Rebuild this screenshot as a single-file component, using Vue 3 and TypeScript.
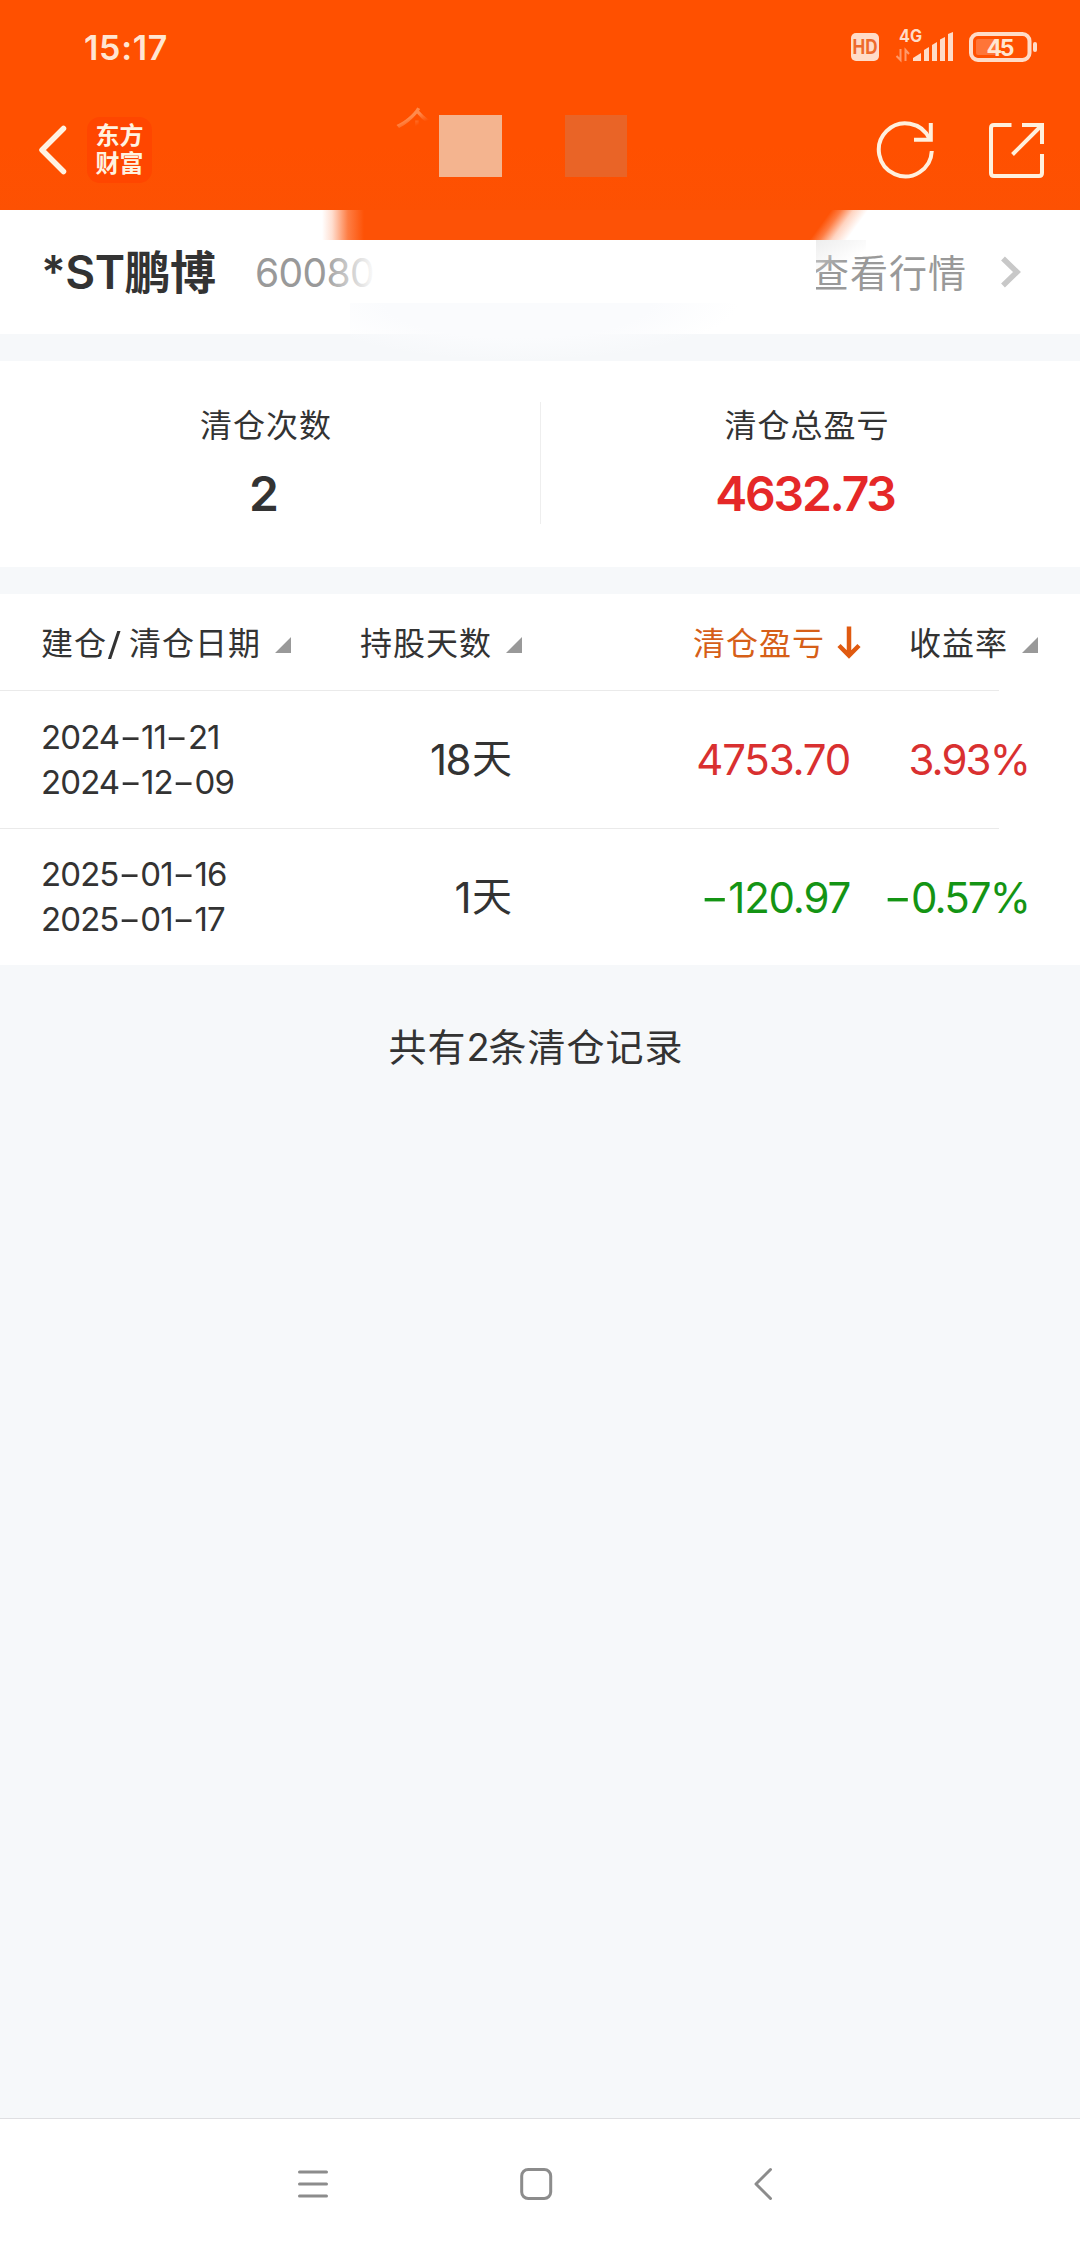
<script setup lang="ts">
interface ClearedRecord {
  opened: string
  closed: string
  days: number
  profit: string
  rate: string
  trend: 'up' | 'down'
}

const records: ClearedRecord[] = [
  { opened: '2024-11-21', closed: '2024-12-09', days: 18, profit: '4753.70', rate: '3.93%', trend: 'up' },
  { opened: '2025-01-16', closed: '2025-01-17', days: 1, profit: '-120.97', rate: '-0.57%', trend: 'down' },
]

// Splits a value so that its dashes can be styled apart from the digits.
const pieces = (value: string): string[] => value.split(/(-)/).filter(Boolean)
</script>

<template>
  <div class="screen">
    <header class="top">
      <div class="status">
        <span class="clock">15:17</span>
        <svg class="status-icons" width="190" height="56" viewBox="850 18 190 56">
          <rect x="852" y="33" width="28" height="28" rx="5" fill="#ffdcc8" />
          <text x="866" y="54" class="hd" text-anchor="middle" textLength="25" lengthAdjust="spacingAndGlyphs">HD</text>
          <text x="900" y="42" class="net" textLength="23" lengthAdjust="spacingAndGlyphs">4G</text>
          <g fill="none" stroke="#ff9a6a" stroke-width="2">
            <path d="M901.500 49V60L897.500 56" />
            <path d="M906.500 61V50L910 54" />
          </g>
          <g fill="#ffdcc8">
            <path d="M914 61V58L922 53V61Z" />
            <path d="M925 61V50L930 47V61Z" />
            <path d="M933 61V45L938 42V61Z" />
            <path d="M941 61V39.500L946 37V61Z" />
            <path d="M949 61V34L954 32V61Z" />
          </g>
          <rect x="972" y="34" width="58.500" height="26" rx="7" fill="none" stroke="#ffdcc8" stroke-width="4" />
          <rect x="977" y="39" width="20" height="16" rx="2" fill="#ff7538" />
          <rect x="1034" y="42" width="4" height="10" rx="2" fill="#ffdcc8" />
          <text x="987.500" y="56" class="battery" textLength="28" lengthAdjust="spacing">45</text>
        </svg>
      </div>
      <div class="bar">
        <svg width="30" height="52" viewBox="38 124 30 52" class="back">
          <path d="M63.500 128.500L42 150L63.500 171.500" fill="none" stroke="#fff3e2" stroke-width="5.500" stroke-linecap="round" stroke-linejoin="round" />
        </svg>
        <div class="badge"><span>东方</span><span>财富</span></div>
        <div class="actions">
          <svg width="60" height="60" viewBox="876 119 60 60" fill="none" stroke="#fff0dd" stroke-width="4">
            <path d="M932.800 150A26.500 26.500 0 1 1 930.500 138" />
            <path d="M915 138.700H931.800V122" />
          </svg>
          <svg width="60" height="60" viewBox="988 119 60 60" fill="none" stroke="#fff0dd" stroke-width="4">
            <path d="M1012.500 124H995q-3 0-3 3V172q0 3 3 3H1040q3 0 3-3V153" />
            <path d="M1023 124H1043V143M1013.500 153.500L1043 124" />
          </svg>
        </div>
      </div>
      <span class="ghost">个</span>
      <i class="block light"></i>
      <i class="block dark"></i>
    </header>

    <section class="stock">
      <h1>*ST鹏博</h1>
      <span class="code">60080</span>
      <span class="quote">查看行情</span>
      <svg width="22" height="34" viewBox="1001 255 22 34" class="chevron">
        <path d="M1004 258.500L1018 272L1004 285.500" fill="none" stroke="#c8c8c8" stroke-width="5.500" />
      </svg>
      <i class="smear"></i>
      <i class="smear-end"></i>
      <i class="fade"></i>
      <i class="shade"></i>
      <i class="tint"></i>
    </section>

    <section class="summary">
      <div class="cell first">
        <span class="label">清仓次数</span>
        <strong>2</strong>
      </div>
      <div class="cell">
        <span class="label">清仓总盈亏</span>
        <strong class="total">4632.73</strong>
      </div>
    </section>

    <section class="table">
      <div class="row head">
        <span class="c1">建仓<b class="slash">/</b>清仓日期<i class="tri"></i></span>
        <span class="c2">持股天数<i class="tri"></i></span>
        <span class="c3 active">清仓盈亏
          <svg width="24" height="33" viewBox="838 625 24 33"><path d="M850 625.500V654M840 644.500L850 654.500L860 644.500" fill="none" stroke="#e05a10" stroke-width="4.500" /></svg>
        </span>
        <span class="c4">收益率<i class="tri"></i></span>
      </div>
      <div v-for="r in records" :key="r.opened" class="row">
        <div class="dates">
          <div v-for="d in [r.opened, r.closed]" :key="d"><span v-for="(p, i) in pieces(d)" :key="i" :class="{ dash: p === '-' }">{{ p }}</span></div>
        </div>
        <div class="days"><span>{{ r.days }}</span><em>天</em></div>
        <div class="profit" :class="r.trend"><span v-for="(p, i) in pieces(r.profit)" :key="i" :class="{ dash: p === '-' }">{{ p }}</span></div>
        <div class="rate" :class="r.trend"><span v-for="(p, i) in pieces(r.rate)" :key="i" :class="{ dash: p === '-' }">{{ p }}</span></div>
      </div>
    </section>

    <p class="count">共有<span>2</span>条清仓记录</p>

    <footer class="nav">
      <svg width="34" height="36" viewBox="297 2165 34 36"><path d="M300.500 2171H327.500M300.500 2183H327.500M300.500 2195H327.500" /></svg>
      <svg width="36" height="36" viewBox="519 2165 36 36"><rect x="522.700" y="2168.500" width="29" height="29" rx="6.500" /></svg>
      <svg width="24" height="36" viewBox="752 2165 24 36"><path d="M771.500 2168.500L757 2183L771.500 2197.500" /></svg>
    </footer>
  </div>
</template>

<style>
body {
  background: #f6f7fa;
}
</style>

<style scoped>
.screen {
  width: 1080px;
  height: 2248px;
  display: flex;
  flex-direction: column;
  background: #f6f8fa;
  color: #333;
  font-family: Inter, "Noto Sans CJK SC", sans-serif;
  overflow: hidden;
}
.top {
  position: relative;
  height: 210px;
  flex: none;
  background: linear-gradient(#ff5000 70%, #fd5103);
}
.status {
  height: 96px;
  display: flex;
  justify-content: space-between;
  padding: 0 41px 0 84px;
}
.clock {
  line-height: 96px;
  font-size: 34px;
  font-weight: 600;
  letter-spacing: 0.7px;
  color: #ffe6d2;
}
.status-icons {
  margin-top: 18px;
}
.hd {
  font-size: 20px;
  font-weight: 700;
  fill: #ee6a2c;
}
.net {
  font-size: 17px;
  font-weight: 700;
  fill: #ffdcc8;
}
.battery {
  font-size: 23px;
  font-weight: 700;
  fill: #ffe6d2;
}
.bar {
  height: 106px;
  display: flex;
  align-items: center;
  padding: 1px 33px 0 38px;
  box-sizing: border-box;
}
.badge {
  width: 65px;
  height: 66px;
  margin-left: 19px;
  border-radius: 13px;
  background: #ff4600;
  display: flex;
  flex-direction: column;
  align-items: center;
  justify-content: center;
  color: #fff3e0;
  font-size: 24px;
  font-weight: 700;
  line-height: 28px;
}
.actions {
  margin-left: auto;
  display: flex;
  gap: 52px;
}
.ghost {
  position: absolute;
  left: 395px;
  top: 106px;
  font-size: 44px;
  line-height: 46px;
  color: #ff8a4c;
  -webkit-mask-image: linear-gradient(155deg, #000 28%, transparent 45%);
  mask-image: linear-gradient(155deg, #000 28%, transparent 45%);
}
.block {
  position: absolute;
  top: 115px;
  width: 63px;
  height: 62px;
}
.light {
  left: 439px;
  background: #f4b48f;
}
.dark {
  left: 565px;
  width: 62px;
  background: #e96427;
}
.stock {
  position: relative;
  flex: none;
  height: 124px;
  display: flex;
  align-items: center;
  background: #fff;
  padding: 0 58px 0 41px;
}
h1 {
  margin: 0;
  width: 214px;
  white-space: nowrap;
  font-size: 46px;
  line-height: 126px;
  font-weight: 600;
  letter-spacing: -0.5px;
}
.code {
  font-size: 39px;
  color: #999;
  letter-spacing: -0.6px;
}
.quote {
  margin-left: auto;
  margin-right: 33px;
  margin-top: -4px;
  font-size: 38px;
  letter-spacing: 1px;
  color: #999;
}
.smear {
  position: absolute;
  left: 322px;
  top: 0;
  width: 456px;
  height: 30px;
  background: linear-gradient(90deg, transparent, #fd520630 10px, #fd5206c0 26px, #fd5206 42px);
}
.smear-end {
  position: absolute;
  left: 777px;
  top: 0;
  width: 100px;
  height: 30px;
  background: linear-gradient(126deg, #fd5206 44px, #fd5206c0 52px, #fd520640 62px, #fd520600 74px);
}
.fade {
  position: absolute;
  left: 322px;
  top: 30px;
  width: 494px;
  height: 94px;
  background: linear-gradient(90deg, #fff0, #fff 54px);
}
.shade {
  position: absolute;
  left: 816px;
  top: 30px;
  width: 50px;
  height: 34px;
  background: linear-gradient(150deg, #e9e9e9cc, #fff0 65%);
}
.tint {
  position: absolute;
  left: 350px;
  top: 93px;
  width: 400px;
  height: 58px;
  background: radial-gradient(ellipse 220px 58px at 42% 0, #fafbfd 60%, #fafbfd00);
}
.summary {
  flex: none;
  height: 206px;
  margin-top: 27px;
  display: flex;
  background: #fff;
}
.cell {
  flex: 1;
  display: flex;
  flex-direction: column;
  align-items: center;
  padding-top: 41px;
  padding-right: 7px;
}
.first {
  padding-right: 9px;
  background: linear-gradient(#eee, #eee) 100% 41px / 1px 122px no-repeat;
}
.label {
  font-size: 32px;
  line-height: 48px;
  letter-spacing: 1px;
}
strong {
  margin-top: 19px;
  margin-right: 4px;
  font-size: 48px;
  line-height: 50px;
  font-weight: 600;
}
.total {
  color: #e52828;
  letter-spacing: -2.2px;
}
.table {
  flex: none;
  margin-top: 27px;
  background: #fff;
}
.row {
  height: 137px;
  display: flex;
  align-items: center;
  padding: 0 41px 0 41px;
  border-bottom: 1px solid;
  border-image: linear-gradient(90deg, #eaeaea 998px, transparent 998px) 1;
}
.row:last-child {
  height: 136px;
  border: 0;
}
.head {
  box-sizing: border-box;
  height: 97px;
  padding-top: 4px;
  font-size: 32px;
  letter-spacing: 1px;
  line-height: 48px;
}
.head > span {
  display: flex;
  flex: none;
  align-items: center;
  white-space: nowrap;
}
.slash {
  width: 22px;
  box-sizing: border-box;
  padding-right: 5px;
  font-weight: 400;
  text-align: center;
  transform: scaleX(1.25);
}
.tri {
  flex: none;
  width: 16px;
  height: 16px;
  margin: 2px 0 0 14px;
  background: #999;
  clip-path: polygon(100% 0, 100% 100%, 0 100%);
}
.c1 {
  width: 319px;
}
.c2 {
  width: 333px;
}
.c3 {
  width: 216px;
}
.c3 svg {
  margin: -4px 0 0 12px;
}
.c4 .tri {
  margin-left: 14px;
}
.active {
  color: #d65f18;
}
.dash {
  display: inline-block;
  margin: 0 0.1em 0 0.1em;
  transform: scaleX(1.5);
  letter-spacing: 0;
}
.dates {
  width: 260px;
  display: flex;
  flex-direction: column;
  font-size: 33px;
  line-height: 45px;
  letter-spacing: -0.9px;
}
.dates .dash {
  line-height: 1;
}
.days {
  width: 211px;
  display: flex;
  justify-content: flex-end;
  align-items: center;
  font-size: 42px;
  letter-spacing: -1.5px;
}
.days em {
  font-style: normal;
  font-size: 40px;
  line-height: 50px;
  letter-spacing: 0;
  margin: -1px 0 0 2px;
}
.profit,
.rate {
  flex: none;
  font-size: 42px;
  letter-spacing: -1.2px;
  text-align: right;
  white-space: nowrap;
}
.profit {
  width: 338px;
}
.rate {
  width: 179px;
  letter-spacing: -1.9px;
}
.up {
  color: #d93030;
}
.down {
  color: #149414;
}
.count {
  margin: 54px 0 0;
  padding-right: 8px;
  text-align: center;
  font-size: 38px;
  line-height: 56px;
  letter-spacing: 1px;
}
.count span {
  letter-spacing: -1px;
}
.nav {
  margin-top: auto;
  flex: none;
  height: 130px;
  box-sizing: border-box;
  border-top: 1px solid #dfdfe2;
  background: #fff;
  display: flex;
  align-items: center;
  padding-left: 296px;
}
.nav svg {
  fill: none;
  stroke: #8c8c8c;
  stroke-width: 3;
  stroke-linecap: round;
  stroke-linejoin: round;
}
.nav svg:nth-child(2) {
  margin-left: 188px;
}
.nav svg:nth-child(3) {
  margin-left: 197px;
}
</style>
